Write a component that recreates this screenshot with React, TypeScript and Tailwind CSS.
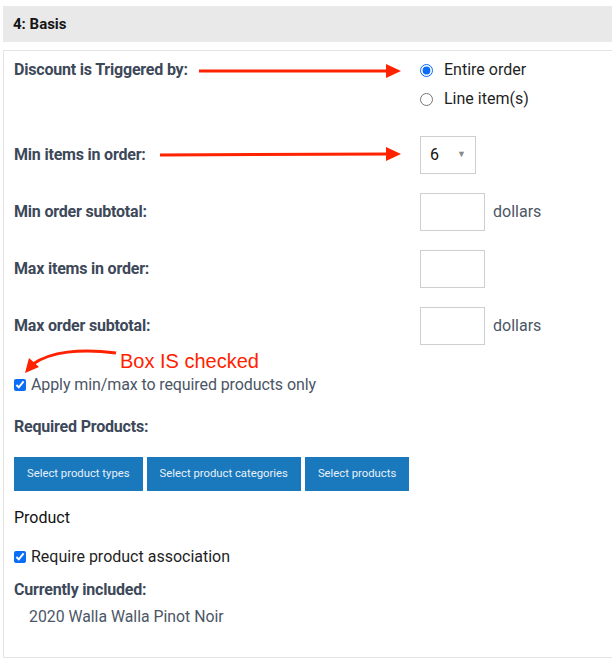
import React from "react";

const labelCls =
  "w-[406px] shrink-0 text-[16px] font-bold text-[#3d4859] tracking-[-0.2px]";

const Box = ({ suffix }: { suffix?: boolean }) => (
  <div className="flex items-center">
    <div className="h-[38px] w-[65px] border border-[#cfcfcf] bg-white" />
    {suffix && (
      <span className="ml-[8px] text-[16px] text-[#4b5666]">dollars</span>
    )}
  </div>
);

const ProductButton = ({ text }: { text: string }) => (
  <button className="h-[34px] bg-[#1a78bd] px-[13px] text-[11.3px] text-[#e8f1f8]">
    {text}
  </button>
);

const App = () => {
  return (
    <div
      className="relative h-[664px] w-[612px] overflow-hidden bg-white"
      style={{ fontFamily: "Roboto, 'Liberation Sans', sans-serif" }}
    >
      {/* section header */}
      <div className="ml-[3px] mt-[6px] flex h-[36px] w-[620px] items-center bg-[#e9e9e9] pl-[10px]">
        <h2 className="text-[15px] font-bold text-[#151515]">4: Basis</h2>
      </div>

      <div className="relative ml-[3px] mt-[8px] w-[620px] border border-[#e4e4e4] pb-[30px] pl-[10px] pt-[9px]">
        {/* triggered by */}
        <div className="flex">
          <div className={`${labelCls} leading-[20px]`}>
            Discount is Triggered by:
          </div>
          <div className="flex flex-col gap-[9px] text-[16px] text-[#1f1f1f]">
            <label className="flex h-[20px] items-center gap-[11px]">
              <input
                type="radio"
                name="basis"
                defaultChecked
                className="m-0 h-[13px] w-[13px] accent-[#0b6cf6]"
              />
              Entire order
            </label>
            <label className="flex h-[20px] items-center gap-[11px]">
              <input
                type="radio"
                name="basis"
                className="m-0 h-[13px] w-[13px]"
              />
              Line item(s)
            </label>
          </div>
        </div>

        <div className="mt-[27px] flex flex-col gap-[19px]">
          <div className="flex items-center">
            <div className={labelCls}>Min items in order:</div>
            <div className="flex h-[38px] w-[56px] items-center justify-between border border-[#cfcfcf] pl-[9px] pr-[9px] text-[16px] text-[#111]">
              6
              <span className="text-[9px] text-[#8a8a8a]">▼</span>
            </div>
          </div>
          <div className="flex items-center">
            <div className={labelCls}>Min order subtotal:</div>
            <Box suffix />
          </div>
          <div className="flex items-center">
            <div className={labelCls}>Max items in order:</div>
            <Box />
          </div>
          <div className="flex items-center">
            <div className={labelCls}>Max order subtotal:</div>
            <Box suffix />
          </div>
        </div>

        <label className="mt-[30px] flex h-[20px] items-center gap-[5px] text-[16px] tracking-[-0.1px] text-[#4b5666]">
          <input
            type="checkbox"
            defaultChecked
            className="m-0 h-[12px] w-[12px] accent-[#0b6cf6]"
          />
          Apply min/max to required products only
        </label>

        <div className={`${labelCls} mt-[22px] leading-[20px]`}>
          Required Products:
        </div>

        <div className="mt-[20px] flex gap-[4px]">
          <ProductButton text="Select product types" />
          <ProductButton text="Select product categories" />
          <ProductButton text="Select products" />
        </div>

        <div className="mt-[15px] text-[16px] leading-[24px] text-[#111]">
          Product
        </div>

        <label className="mt-[17px] flex h-[20px] items-center gap-[5px] text-[16px] text-[#1f1f1f]">
          <input
            type="checkbox"
            defaultChecked
            className="m-0 h-[12px] w-[12px] accent-[#0b6cf6]"
          />
          Require product association
        </label>

        <div className={`${labelCls} mt-[13px] leading-[20px]`}>
          Currently included:
        </div>
        <div className="mt-[7px] pl-[15px] text-[15.8px] leading-[20px] text-[#4b5666]">
          2020 Walla Walla Pinot Noir
        </div>
      </div>

      {/* annotations */}
      <svg
        className="pointer-events-none absolute left-0 top-0"
        width="612"
        height="664"
      >
        <line x1="199" y1="71" x2="388" y2="71" stroke="#ff2200" strokeWidth="3" />
        <polygon points="386,64 401,71 386,78" fill="#ff2200" />
        <line x1="160" y1="155" x2="388" y2="154" stroke="#ff2200" strokeWidth="3" />
        <polygon points="386,147 401,154 386,161" fill="#ff2200" />
        <path
          d="M116 353 C 80 348, 50 352, 33 364"
          fill="none"
          stroke="#ff2200"
          strokeWidth="3"
        />
        <polygon points="25,373 29,358 39,367" fill="#ff2200" />
      </svg>
      <div
        className="absolute left-[120px] top-[349px] text-[20px] leading-[24px] text-[#ff2200]"
        style={{ fontFamily: "'Liberation Sans', Arial, sans-serif" }}
      >
        Box IS checked
      </div>
    </div>
  );
};

export default App;
